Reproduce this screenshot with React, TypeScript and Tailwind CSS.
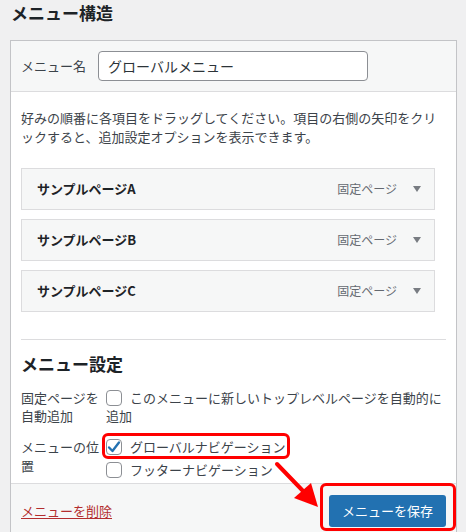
const items = ["サンプルページA", "サンプルページB", "サンプルページC"];

function Checkbox({ checked = false }: { checked?: boolean }) {
  return (
    <span className="relative inline-block h-[16px] w-[16px] shrink-0 rounded-[4px] border border-[#8c8f94] bg-white align-[-3px]">
      {checked && (
        <svg viewBox="0 0 20 20" className="absolute -left-[2px] -top-[2px] h-[18px] w-[18px]">
          <path d="M4.5 10.5 L8.3 14.5 L15.5 5" fill="none" stroke="#2271b1" strokeWidth="2.6" strokeLinecap="round" strokeLinejoin="round" />
        </svg>
      )}
    </span>
  );
}

export default function App() {
  return (
    <div className="relative h-[532px] w-[466px] overflow-hidden bg-[#f0f0f1] font-['Noto_Sans_CJK_JP',sans-serif] text-[13px] text-[#3c434a]">
      <h2 className="px-[11px] text-[17px] font-bold leading-[26px] text-[#1d2327]">メニュー構造</h2>

      <div className="ml-[10px] mt-[14px] w-[447px] border border-[#c3c4c7] bg-white">
        <div className="flex h-[51px] items-center gap-[12px] border-b border-[#dcdcde] bg-[#f6f7f7] px-[10px]">
          <span className="text-[13px] text-[#3c434a]">メニュー名</span>
          <div className="flex h-[30px] w-[270px] items-center rounded-[4px] border border-[#8c8f94] bg-white px-[9px] text-[14px] text-[#2c3338]">
            グローバルメニュー
          </div>
        </div>

        <div className="px-[10px]">
          <p className="pt-[16px] leading-[19px]">
            好みの順番に各項目をドラッグしてください。項目の右側の矢印をクリックすると、追加設定オプションを表示できます。
          </p>

          <div className="mt-[22px] flex flex-col gap-[9px]">
            {items.map((name) => (
              <div
                key={name}
                className="flex h-[42px] w-[414px] items-center border border-[#dcdcde] bg-[#f6f7f7] pl-[15px] pr-[13px]"
              >
                <span className="flex-1 font-bold text-[#1d2327]">{name}</span>
                <span className="text-[12px] text-[#646970]">固定ページ</span>
                <svg viewBox="0 0 8 6" className="ml-[16px] h-[6px] w-[8px]">
                  <path d="M0 0 H8 L4 6 Z" fill="#787c82" />
                </svg>
              </div>
            ))}
          </div>

          <div className="mt-[27px] border-t border-[#dcdcde]" />

          <h3 className="mt-[12px] text-[17px] font-bold leading-[24px] text-[#1d2327]">メニュー設定</h3>

          <div className="mt-[13px] flex leading-[18px]">
            <div className="w-[85px] shrink-0">固定ページを自動追加</div>
            <div className="flex-1">
              <Checkbox />
              <span className="ml-[8px]">このメニューに新しいトップレベルページを自動的に追加</span>
            </div>
          </div>

          <div className="mt-[12px] flex pb-[4px] leading-[19px]">
            <div className="w-[85px] shrink-0">メニューの位置</div>
            <div className="flex-1">
              <div className="flex items-center gap-[8px]">
                <Checkbox checked />
                <span>グローバルナビゲーション</span>
              </div>
              <div className="mt-[4px] flex items-center gap-[8px]">
                <Checkbox />
                <span>フッターナビゲーション</span>
              </div>
            </div>
          </div>
        </div>

        <div className="flex h-[60px] items-start justify-between border-t border-[#dcdcde] bg-[#f6f7f7] px-[10px] pt-[11px]">
          <a className="mt-[6px] text-[#b32d2e] underline underline-offset-2">メニューを削除</a>
          <button className="h-[32px] rounded-[3px] bg-[#2271b1] px-[13px] text-[13px] text-white">
            メニューを保存
          </button>
        </div>
      </div>

      <div className="absolute left-[102px] top-[433px] h-[26px] w-[188px] rounded-[6px] border-[3px] border-[#f00]" />
      <div className="absolute left-[320px] top-[483px] h-[48px] w-[136px] rounded-[6px] border-[3px] border-[#f00]" />
      <svg className="absolute left-0 top-0" width="466" height="532" viewBox="0 0 466 532">
        <line x1="277" y1="464" x2="304" y2="492" stroke="#f00" strokeWidth="4" strokeLinecap="round" />
        <path d="M318 507 L294 498 L311 483 Z" fill="#f00" />
      </svg>
    </div>
  );
}
